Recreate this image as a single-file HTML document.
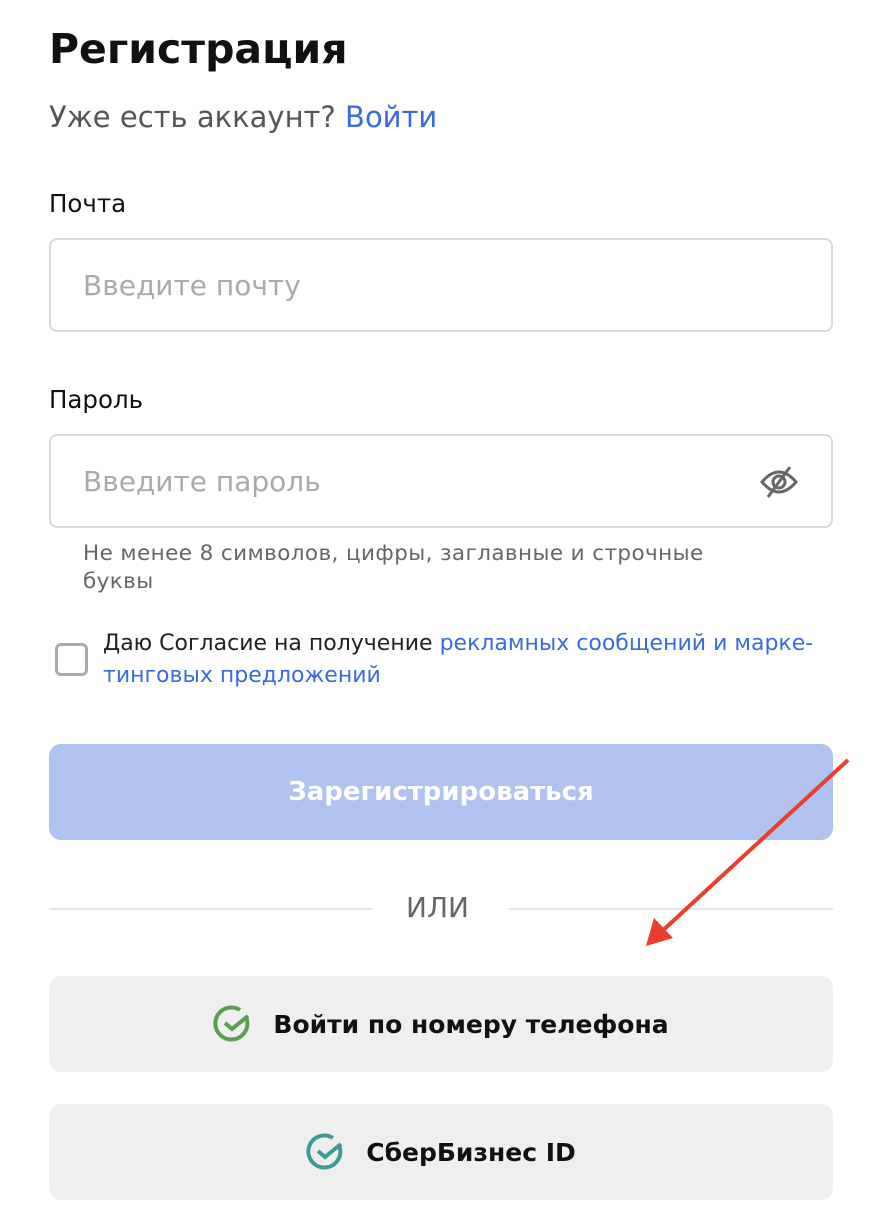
<!DOCTYPE html><html><head><meta charset="utf-8"><style>
*{margin:0;padding:0;box-sizing:border-box}
body{width:872px;height:1220px;background:#fff;font-family:"DejaVu Sans","Liberation Sans",sans-serif;position:relative;overflow:hidden;color:#111}
.a{position:absolute;white-space:nowrap}
.inp{position:absolute;left:49px;width:784px;height:94px;border:2px solid #d9d9d9;border-radius:8px}
.ph{position:absolute;left:32px;top:29px;font-size:28px;color:#aaa}
.btn{position:absolute;left:49px;width:784px;height:96px;border-radius:12px;background:#efefef;display:flex;align-items:center;justify-content:center;font-size:25px;font-weight:bold}
</style></head><body>
<div class="a" style="left:49px;top:25px;font-size:41px;font-weight:bold">Регистрация</div>
<div class="a" style="left:49px;top:100px;font-size:29px;color:#555">Уже есть аккаунт? <span style="color:#3a6ae0">Войти</span></div>
<div class="a" style="left:49px;top:189px;font-size:24.5px">Почта</div>
<div class="inp" style="top:238px"><div class="ph">Введите почту</div></div>
<div class="a" style="left:49px;top:385px;font-size:24.5px">Пароль</div>
<div class="inp" style="top:434px"><div class="ph">Введите пароль</div>
<svg class="a" style="left:708px;top:28px" width="40" height="36" viewBox="0 0 40 36"><path d="M3 18 Q20 -2 37 18 Q20 38 3 18Z" fill="none" stroke="#666" stroke-width="3"/><circle cx="20" cy="18" r="6" fill="none" stroke="#666" stroke-width="3"/><line x1="9" y1="33" x2="31" y2="3" stroke="#666" stroke-width="3"/></svg></div>
<div class="a" style="left:83px;top:540px;font-size:21.5px;color:#666;line-height:28px;letter-spacing:.4px">Не менее 8 символов, цифры, заглавные и строчные<br>буквы</div>
<div class="a" style="left:55px;top:643px;width:33px;height:33px;border:3px solid #aaa;border-radius:6px"></div>
<div class="a" style="left:103px;top:628px;font-size:22px;line-height:32px;color:#222">Даю Согласие на получение <span style="color:#3a6ae0">рекламных сообщений и марке-<br>тинговых предложений</span></div>
<div class="btn" style="top:744px;background:#b0c3f0;color:#fff;font-size:26px">Зарегистрироваться</div>
<div class="a" style="left:49px;top:908px;width:323px;height:2px;background:#e3e3e3"></div>
<div class="a" style="left:509px;top:908px;width:324px;height:2px;background:#e3e3e3"></div>
<div class="a" style="left:406px;top:891px;font-size:28px;color:#666">ИЛИ</div>
<div class="btn" style="top:976px"><svg width="40" height="40" viewBox="0 0 40 40" style="margin-right:20px"><path d="M33 13 A16 16 0 1 1 27 6" fill="none" stroke="#5a9e4d" stroke-width="4"/><path d="M12 19 L19 25 L35 12" fill="none" stroke="#5a9e4d" stroke-width="4"/></svg>Войти по номеру телефона</div>
<div class="btn" style="top:1104px"><svg width="40" height="40" viewBox="0 0 40 40" style="margin-right:20px"><path d="M33 13 A16 16 0 1 1 27 6" fill="none" stroke="#3f9a94" stroke-width="4"/><path d="M12 19 L19 25 L35 12" fill="none" stroke="#3f9a94" stroke-width="4"/></svg>СберБизнес ID</div>
<svg class="a" style="left:0;top:0" width="872" height="1220"><line x1="848" y1="760" x2="660" y2="933" stroke="#e8402c" stroke-width="4"/><path d="M646 946 L654 918 L673 938Z" fill="#e8402c"/></svg>
</body></html>
